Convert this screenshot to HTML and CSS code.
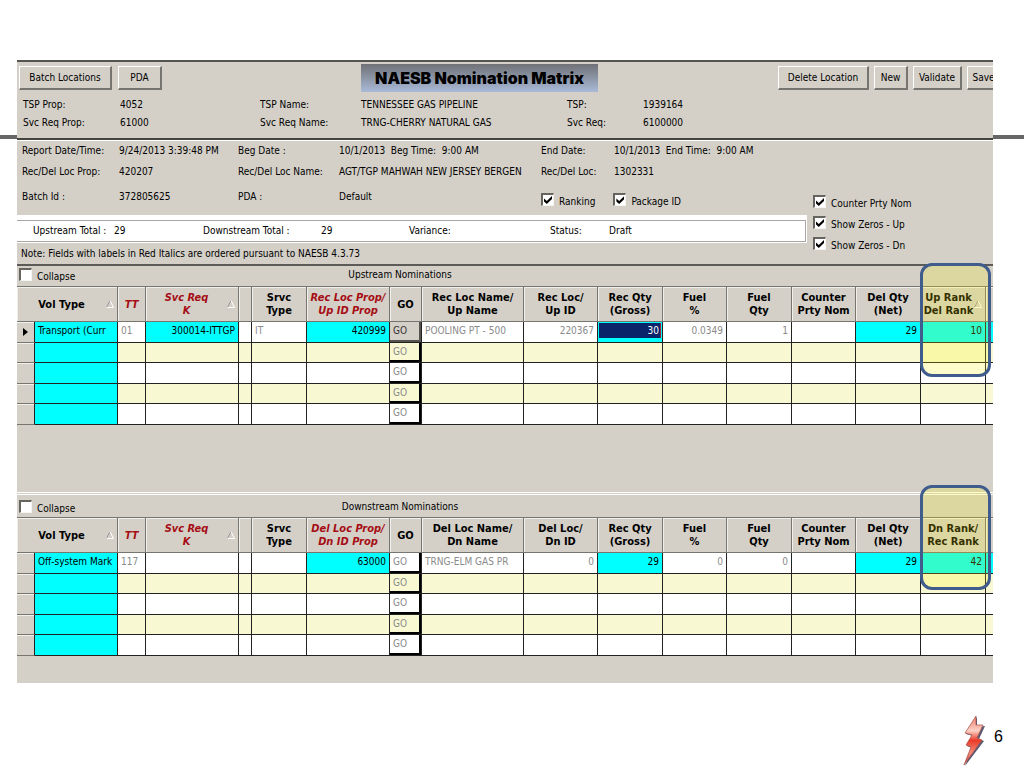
FILE: index.html
```html
<!DOCTYPE html>
<html lang="en">
<head>
<meta charset="utf-8">
<title>NAESB Nomination Matrix</title>
<link rel="stylesheet" href="styles.css">
</head>
<body>
<main class="slide">
  <section class="app">
    <header class="toolbar">
      <div class="tools">
        <button class="btn btn-batch">Batch Locations</button>
        <button class="btn btn-pda">PDA</button>
      </div>
      <h1 class="title">NAESB Nomination Matrix</h1>
      <div class="tools tools-end">
        <button class="btn btn-delete">Delete Location</button>
        <button class="btn btn-new">New</button>
        <button class="btn btn-validate">Validate</button>
        <button class="btn btn-new">Save</button>
      </div>
    </header>
    <div class="fields party">
      <span>TSP Prop:</span><span>4052</span><span>TSP Name:</span><span>TENNESSEE GAS PIPELINE</span><span>TSP:</span><span>1939164</span>
      <span>Svc Req Prop:</span><span>61000</span><span>Svc Req Name:</span><span>TRNG-CHERRY NATURAL GAS</span><span>Svc Req:</span><span>6100000</span>
    </div>
    <div class="summary">
      <div class="summary-main">
        <div class="fields batch">
          <span>Report Date/Time:</span><span>9/24/2013 3:39:48 PM</span><span>Beg Date :</span><span>10/1/2013&nbsp; Beg Time:&nbsp; 9:00 AM</span><span>End Date:</span><span>10/1/2013&nbsp; End Time:&nbsp; 9:00 AM</span>
          <span>Rec/Del Loc Prop:</span><span>420207</span><span>Rec/Del Loc Name:</span><span>AGT/TGP MAHWAH NEW JERSEY BERGEN</span><span>Rec/Del Loc:</span><span>1302331</span>
          <span>Batch Id :</span><span>372805625</span><span>PDA :</span><span>Default</span>
          <div class="options">
            <label class="check"><input type="checkbox" checked>Ranking</label>
            <label class="check"><input type="checkbox" checked>Package ID</label>
          </div>
        </div>
        <div class="totals">
          <div class="totals-row">
            <span>Upstream Total :</span><span>29</span><span>Downstream Total :</span><span>29</span><span>Variance:</span><span>Status:</span><span>Draft</span>
          </div>
        </div>
        <p class="note">Note: Fields with labels in Red Italics are ordered pursuant to NAESB 4.3.73</p>
      </div>
      <div class="filters">
        <label class="check"><input type="checkbox" checked>Counter Prty Nom</label>
        <label class="check"><input type="checkbox" checked>Show Zeros - Up</label>
        <label class="check"><input type="checkbox" checked>Show Zeros - Dn</label>
      </div>
    </div>

    <section class="panel upstream">
      <div class="panel-head">
        <label class="check"><input type="checkbox">Collapse</label>
        <h2 class="panel-title">Upstream Nominations</h2>
      </div>
      <table class="grid">
        <colgroup><col class="c-sel"><col class="c-vol"><col class="c-tt"><col class="c-svc"><col class="c-gap"><col class="c-type"><col class="c-vol"><col class="c-go"><col class="c-name"><col class="c-id"><col class="c-qty"><col class="c-fuel"><col class="c-qty"><col class="c-fuel"><col class="c-qty"><col class="c-qty"><col class="c-rest"></colgroup>
        <thead><tr>
          <th colspan="2"><div class="sort"><span>Vol Type</span><svg class="tri" viewBox="0 0 8 8"><path d="M4 .5L.5 7.5" stroke="#999"/><path d="M4 .5L7.5 7.5H.5" stroke="#fff"/></svg></div></th>
          <th class="key">TT</th>
          <th class="key"><div class="sort"><span>Svc Req<br>K</span><svg class="tri" viewBox="0 0 8 8"><path d="M4 .5L.5 7.5" stroke="#999"/><path d="M4 .5L7.5 7.5H.5" stroke="#fff"/></svg></div></th>
          <th></th><th>Srvc<br>Type</th><th class="key">Rec Loc Prop/<br>Up ID Prop</th><th>GO</th><th>Rec Loc Name/<br>Up Name</th><th>Rec Loc/<br>Up ID</th><th>Rec Qty<br>(Gross)</th><th>Fuel<br>%</th><th>Fuel<br>Qty</th><th>Counter<br>Prty Nom</th><th>Del Qty<br>(Net)</th>
          <th><div class="sort rank"><span>Up Rank<br>Del Rank</span><svg class="tri" viewBox="0 0 8 8"><path d="M4 .5L.5 7.5" stroke="#999"/><path d="M4 .5L7.5 7.5H.5" stroke="#fff"/></svg></div></th><th></th>
        </tr></thead>
        <tbody>
          <tr><td class="sel"><svg class="arrow" viewBox="0 0 5 8"><path d="M0 0L5 4L0 8Z"/></svg></td><td class="on">Transport (Curr</td><td class="dim">01</td><td class="on num">300014-ITTGP</td><td></td><td class="dim">IT</td><td class="on num">420999</td><td class="act"><button class="go go-live">GO</button></td><td class="dim">POOLING PT - 500</td><td class="dim num">220367</td><td class="on edit"><input class="cell-input" value="30" aria-label="Rec Qty"></td><td class="dim num">0.0349</td><td class="dim num">1</td><td></td><td class="on num">29</td><td class="on num">10</td><td class="on"></td></tr>
          <tr><td class="sel"></td><td class="on"></td><td></td><td></td><td></td><td></td><td></td><td class="act"><button class="go">GO</button></td><td></td><td></td><td></td><td></td><td></td><td></td><td></td><td></td><td></td></tr>
          <tr><td class="sel"></td><td class="on"></td><td></td><td></td><td></td><td></td><td></td><td class="act"><button class="go">GO</button></td><td></td><td></td><td></td><td></td><td></td><td></td><td></td><td></td><td></td></tr>
          <tr><td class="sel"></td><td class="on"></td><td></td><td></td><td></td><td></td><td></td><td class="act"><button class="go">GO</button></td><td></td><td></td><td></td><td></td><td></td><td></td><td></td><td></td><td></td></tr>
          <tr><td class="sel"></td><td class="on"></td><td></td><td></td><td></td><td></td><td></td><td class="act"><button class="go">GO</button></td><td></td><td></td><td></td><td></td><td></td><td></td><td></td><td></td><td></td></tr>
        </tbody>
      </table>
      <div class="highlight highlight-up"></div>
    </section>

    <section class="panel downstream">
      <div class="panel-head">
        <label class="check"><input type="checkbox">Collapse</label>
        <h2 class="panel-title">Downstream Nominations</h2>
      </div>
      <table class="grid">
        <colgroup><col class="c-sel"><col class="c-vol"><col class="c-tt"><col class="c-svc"><col class="c-gap"><col class="c-type"><col class="c-vol"><col class="c-go"><col class="c-name"><col class="c-id"><col class="c-qty"><col class="c-fuel"><col class="c-qty"><col class="c-fuel"><col class="c-qty"><col class="c-qty"><col class="c-rest"></colgroup>
        <thead><tr>
          <th colspan="2"><div class="sort"><span>Vol Type</span><svg class="tri" viewBox="0 0 8 8"><path d="M4 .5L.5 7.5" stroke="#999"/><path d="M4 .5L7.5 7.5H.5" stroke="#fff"/></svg></div></th>
          <th class="key">TT</th>
          <th class="key"><div class="sort"><span>Svc Req<br>K</span><svg class="tri" viewBox="0 0 8 8"><path d="M4 .5L.5 7.5" stroke="#999"/><path d="M4 .5L7.5 7.5H.5" stroke="#fff"/></svg></div></th>
          <th></th><th>Srvc<br>Type</th><th class="key">Del Loc Prop/<br>Dn ID Prop</th><th>GO</th><th>Del Loc Name/<br>Dn Name</th><th>Del Loc/<br>Dn ID</th><th>Rec Qty<br>(Gross)</th><th>Fuel<br>%</th><th>Fuel<br>Qty</th><th>Counter<br>Prty Nom</th><th>Del Qty<br>(Net)</th>
          <th>Dn Rank/<br>Rec Rank</th><th></th>
        </tr></thead>
        <tbody>
          <tr><td class="sel"></td><td class="on">Off-system Mark</td><td class="dim">117</td><td></td><td></td><td></td><td class="on num">63000</td><td class="act"><button class="go">GO</button></td><td class="dim">TRNG-ELM GAS PR</td><td class="dim num">0</td><td class="on num">29</td><td class="dim num">0</td><td class="dim num">0</td><td></td><td class="on num">29</td><td class="on num">42</td><td class="on"></td></tr>
          <tr><td class="sel"></td><td class="on"></td><td></td><td></td><td></td><td></td><td></td><td class="act"><button class="go">GO</button></td><td></td><td></td><td></td><td></td><td></td><td></td><td></td><td></td><td></td></tr>
          <tr><td class="sel"></td><td class="on"></td><td></td><td></td><td></td><td></td><td></td><td class="act"><button class="go">GO</button></td><td></td><td></td><td></td><td></td><td></td><td></td><td></td><td></td><td></td></tr>
          <tr><td class="sel"></td><td class="on"></td><td></td><td></td><td></td><td></td><td></td><td class="act"><button class="go">GO</button></td><td></td><td></td><td></td><td></td><td></td><td></td><td></td><td></td><td></td></tr>
          <tr><td class="sel"></td><td class="on"></td><td></td><td></td><td></td><td></td><td></td><td class="act"><button class="go">GO</button></td><td></td><td></td><td></td><td></td><td></td><td></td><td></td><td></td><td></td></tr>
        </tbody>
      </table>
      <div class="highlight highlight-down"></div>
    </section>
  </section>
  <footer class="footer">
    <svg class="bolt" viewBox="0 0 26 52" aria-hidden="true">
      <defs><linearGradient id="bolt" x1="0" y1="0" x2="0" y2="1"><stop offset="0" stop-color="#ee7a66"/><stop offset=".3" stop-color="#fbd0c4"/><stop offset=".5" stop-color="#ea3a28"/><stop offset=".75" stop-color="#f58a78"/><stop offset="1" stop-color="#b9403c"/></linearGradient></defs>
      <path d="M14 1L3 18L10 20L4 30L9 32L2 50L21 25L16 23L22 10L14 11Z" fill="#5a5a72" transform="translate(1 1)"/>
      <path d="M14 1L3 18L10 20L4 30L9 32L2 50L20 25L15 23L21 10L14 10Z" fill="url(#bolt)" stroke="#a5504a" stroke-width=".7"/>
    </svg>
    <span class="page-number">6</span>
  </footer>
</main>
</body>
</html>
```

FILE: styles.css
```css
* { box-sizing: border-box; }

body {
  margin: 0;
  background: #fff;
  color: #000;
  font: 10px/14px "DejaVu Sans Condensed", "DejaVu Sans", sans-serif;
}

.slide {
  min-height: 100vh;
  padding: 60px 31px 0 17px;
  background: linear-gradient(#666, #666) 0 135px / 100% 4px no-repeat #fff;
}

.app {
  background: #d4d0c8;
  border-top: 2px solid #55554f;
  padding-bottom: 27px;
  overflow: hidden;
  white-space: nowrap;
}

h1, h2, p { margin: 0; font-weight: normal; }
button, input { font: inherit; color: inherit; margin: 0; }

/* Toolbar */
.toolbar { display: flex; align-items: center; padding: 2px 0 6px 2px; }
.tools { display: flex; gap: 6px; flex: 0 0 342px; }
.tools-end { flex: 0 0 auto; gap: 5px; margin-left: auto; margin-right: -8px; }
.btn {
  height: 24px;
  padding: 1px 0 0;
  text-align: center;
  background: #d4d0c8;
  border: 1px solid #fff;
  border-right: 2px solid #77756f;
  border-bottom: 2px solid #77756f;
}
.btn-batch { width: 93px; }
.btn-pda { width: 44px; }
.btn-delete { width: 91px; }
.btn-new { width: 34px; }
.btn-validate { width: 49px; }
.title {
  width: 237px;
  height: 28px;
  background: linear-gradient(#707176, #a9bad8);
  font: 900 16px/28px Inter, "DejaVu Sans", sans-serif;
  text-align: center;
}

/* Field grids */
.fields { display: grid; }
.party {
  grid-template-columns: 97px 140px 101px 206px 76px 1fr;
  row-gap: 4px;
  padding: 0 6px 8px;
  border-bottom: 2px solid #44443f;
}
.summary {
  display: grid;
  grid-template-columns: minmax(0, 790px) 1fr;
  border-top: 1px solid #fff;
  border-bottom: 2px solid #5c5b57;
}
.batch {
  grid-template-columns: 97px 119px 101px 202px 73px 1fr;
  grid-template-rows: 21px 25px 14px;
  padding: 3px 0 11px 5px;
}
.options { grid-column: 5 / 7; display: flex; gap: 18px; padding-top: 3px; }
.filters { display: flex; flex-direction: column; gap: 6px; padding: 54px 0 0 6px; }

.check { display: flex; align-items: flex-start; gap: 5px; height: 15px; line-height: 17px; }
.check input {
  appearance: none;
  flex: none;
  width: 13px;
  height: 13px;
  padding: 1px;
  background: #fff;
  border: 1px solid #f4f4f0;
  border-top: 2px solid #66645f;
  border-left: 2px solid #66645f;
}
.check input:checked::before {
  content: "";
  display: block;
  width: 8px;
  height: 8px;
  background: #000;
  clip-path: polygon(0 30%, 35% 62%, 100% 0, 100% 36%, 35% 100%, 0 68%);
}

.totals { background: #fff; padding: 5px 1px 1px 0; }
.totals-row {
  display: grid;
  grid-template-columns: 81px 89px 118px 88px 141px 59px 1fr;
  padding: 3px 0 3px 16px;
  border: 1px solid #a8a6a0;
  border-left: 0;
}
.note { padding: 4px 4px 3px; }

/* Nomination panels */
.panel { position: relative; }
.panel-head { display: grid; grid-template-columns: 100px 566px 1fr; padding-top: 2px; height: 20px; }
.panel-head .check { padding-left: 2px; }
.panel-title { font-size: 10px; text-align: center; }
.downstream { margin-top: 67px; border-top: 3px double #fff; }
.downstream .panel-head { height: 22px; padding-top: 5px; }

.grid { width: 100%; table-layout: fixed; border-collapse: separate; border-spacing: 0; }
.c-sel { width: 18px; }
.c-vol { width: 83px; }
.c-tt { width: 28px; }
.c-svc { width: 93px; }
.c-gap { width: 13px; }
.c-type { width: 55px; }
.c-go { width: 32px; }
.c-name { width: 102px; }
.c-id { width: 74px; }
.c-qty { width: 65px; }
.c-fuel { width: 64px; }
.c-rest { width: 7px; }

.grid th {
  height: 36px;
  padding: 0;
  border: 1px solid #77756f;
  border-width: 1px 1px 1px 0;
  box-shadow: inset 1px 1px #f2f0ea;
  font: bold 11px/13px "DejaVu Sans Condensed", "DejaVu Sans", sans-serif;
  color: #000;
}
.grid th.key { color: #a60d14; font-style: italic; }
.sort { display: flex; align-items: center; padding-right: 3px; }
.sort span { flex: 1; }
.sort.rank { padding-left: 2px; }
.tri { width: 8px; height: 8px; fill: none; flex: none; }

.grid td {
  height: 21px;
  padding: 0 3px 3px;
  line-height: 14px;
  background: #fff;
  border-right: 1px solid #222;
  border-bottom: 1px solid #222;
  overflow: hidden;
}
.grid tbody tr:nth-child(even) td { height: 20px; background: #f8f9d2; }
.grid tbody td.on, .grid tbody tr:nth-child(even) td.on { background: #0ff; }
.grid tbody td.sel, .grid tbody tr:nth-child(even) td.sel {
  background: #d4d0c8;
  border-bottom-color: #77756f;
  box-shadow: inset 0 1px #f2f0ea;
  padding: 0 0 0 6px;
}
.grid td.dim { color: #8a8a8a; }
.grid td.num { text-align: right; }
.grid td.act { padding: 0; }
.grid td.edit { padding: 1px; vertical-align: top; }
.grid th:last-child, .grid td:last-child { border-right: 0; }
.arrow { display: block; width: 5px; height: 8px; }

.go {
  display: block;
  width: 100%;
  height: 20px;
  padding: 0 3px;
  text-align: left;
  color: #8a8a8a;
  background: transparent;
  border: 0;
  border-right: 2px solid #000;
  border-bottom: 2px solid #000;
}
.grid tbody tr:nth-child(even) .go { height: 19px; }
.go-live { color: #333; background: #d4d0c8; border-color: #55534e; }
.cell-input {
  display: block;
  width: 100%;
  height: 15px;
  padding: 0 1px;
  border: 0;
  border-right: 1px solid #a02040;
  border-radius: 0;
  background: #0a246a;
  color: #fff;
  text-align: right;
}

.highlight {
  position: absolute;
  right: 2px;
  width: 71px;
  border: 3px solid #3f5c8c;
  border-radius: 12px;
  background: rgba(255, 240, 0, .2);
}
.highlight-up { top: -3px; height: 114px; }
.highlight-down { top: -10px; height: 105px; }
.upstream { z-index: 1; }

/* Slide footer */
.footer { display: flex; justify-content: flex-end; align-items: center; gap: 6px; padding-top: 32px; margin-right: -10px; }
.bolt { width: 26px; height: 52px; }
.page-number { font: 16px/20px "Liberation Sans", sans-serif; padding-bottom: 8px; }
```
